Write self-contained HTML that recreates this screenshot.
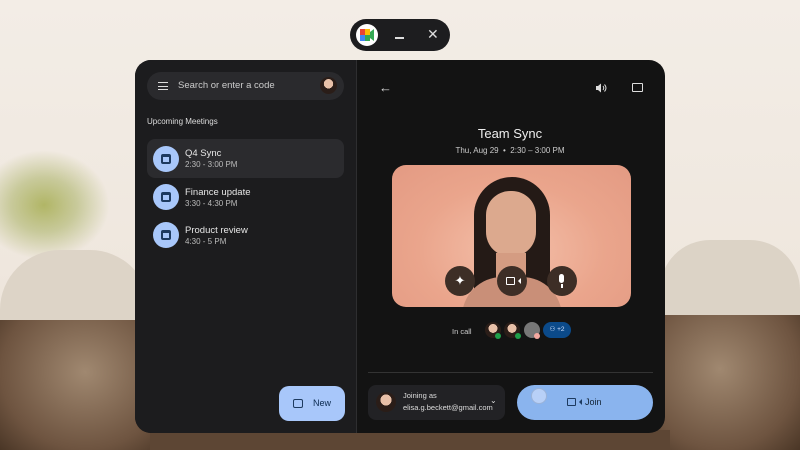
<!DOCTYPE html>
<html><head><style>
*{margin:0;padding:0;box-sizing:border-box}
body{width:800px;height:450px;overflow:hidden;position:relative;font-family:"Liberation Sans",sans-serif;
background:linear-gradient(180deg,#f3ede6 0%,#efe7de 60%,#e6dccf 100%);}
.abs{position:absolute}
.panel{left:135px;top:60px;width:530px;height:373px;border-radius:16px;overflow:hidden;background:#131313}
.left{left:0;top:0;width:222px;height:373px;background:#1c1c1e;border-right:1px solid #2e2e30}
.txt{color:#e6e6e6}
.cal{width:26px;height:26px;border-radius:50%;background:#a8c7fa;display:flex;align-items:center;justify-content:center}
.cal i{display:block;width:10px;height:10px;border:2px solid #1d3a5f;border-top-width:3px;border-radius:2px}
.av{border-radius:50%;background:radial-gradient(circle at 50% 40%,#e8c0a8 0 35%,#2a1d18 36%);}
</style></head><body>
<div class="abs" style="left:0;top:150px;width:110px;height:110px;background:radial-gradient(ellipse at 40% 50%,rgba(150,160,50,.7) 0,rgba(140,155,50,.4) 35%,rgba(0,0,0,0) 70%)"></div>
<div class="abs" style="left:0;top:250px;width:150px;height:100px;border-radius:60px 60px 10px 10px;background:#ddd4c7"></div>
<div class="abs" style="left:660px;top:240px;width:140px;height:90px;border-radius:50px 50px 10px 10px;background:#dcd3c6"></div>
<div class="abs" style="left:0;top:320px;width:170px;height:130px;background:radial-gradient(ellipse at 50% 40%,#a08870,#6e5440 70%,#4a3626)"></div>
<div class="abs" style="left:640px;top:315px;width:160px;height:135px;background:radial-gradient(ellipse at 50% 40%,#a08870,#6e5440 70%,#4a3626)"></div>
<div class="abs" style="left:150px;top:430px;width:520px;height:20px;background:#5d4634"></div>

<div class="abs" style="left:350px;top:19px;width:100px;height:32px;border-radius:16px;background:#1d1d1f"></div>
<div class="abs" style="left:356px;top:24px;width:22px;height:22px;border-radius:50%;background:#fff;display:flex;align-items:center;justify-content:center">
<svg width="14" height="12" viewBox="0 0 14 12"><rect x="0" y="0" width="5" height="6" fill="#ea4335"/><rect x="5" y="0" width="5" height="6" fill="#fbbc04"/><rect x="0" y="6" width="5" height="6" fill="#4285f4"/><rect x="5" y="6" width="5" height="6" fill="#34a853"/><path d="M10 3 14 0v12l-4-3z" fill="#34a853"/></svg></div>
<div class="abs" style="left:395px;top:37px;width:9px;height:1.5px;background:#ddd"></div>
<div class="abs txt" style="left:427px;top:26px;font-size:14px;color:#ddd">✕</div>

<div class="abs panel">
 <div class="abs left">
  <div class="abs" style="left:12px;top:12px;width:197px;height:28px;border-radius:14px;background:#2a2a2d"></div>
  <div class="abs" style="left:23px;top:22px;width:10px;height:8px;border-top:1.5px solid #ddd;border-bottom:1.5px solid #ddd"></div>
  <div class="abs" style="left:23px;top:25.5px;width:10px;height:1.5px;background:#ddd"></div>
  <div class="abs txt" style="left:43px;top:20px;font-size:9.5px;color:#ccc">Search or enter a code</div>
  <div class="abs av" style="left:185px;top:17px;width:17px;height:17px"></div>
  <div class="abs txt" style="left:12px;top:57px;font-size:8px;color:#ddd">Upcoming Meetings</div>
  <div class="abs" style="left:12px;top:79px;width:197px;height:39px;border-radius:8px;background:#2b2b2e"></div>
  <div class="abs cal" style="left:18px;top:86px"><i></i></div>
  <div class="abs txt" style="left:50px;top:88px;font-size:9.5px">Q4 Sync</div>
  <div class="abs txt" style="left:50px;top:100px;font-size:8px;color:#bbb">2:30 - 3:00 PM</div>
  <div class="abs cal" style="left:18px;top:124px"><i></i></div>
  <div class="abs txt" style="left:50px;top:127px;font-size:9.5px">Finance update</div>
  <div class="abs txt" style="left:50px;top:139px;font-size:8px;color:#bbb">3:30 - 4:30 PM</div>
  <div class="abs cal" style="left:18px;top:162px"><i></i></div>
  <div class="abs txt" style="left:50px;top:165px;font-size:9.5px">Product review</div>
  <div class="abs txt" style="left:50px;top:177px;font-size:8px;color:#bbb">4:30 - 5 PM</div>
  <div class="abs" style="left:144px;top:326px;width:66px;height:35px;border-radius:10px;background:#a8c7fa"></div>
  <div class="abs" style="left:158px;top:339px;width:10px;height:9px;border:1.5px solid #1d3a5f;border-radius:2px"></div>
  <div class="abs" style="left:178px;top:338px;font-size:9px;color:#0b2a4f">New</div>
 </div>
 <div class="abs txt" style="left:244px;top:20px;font-size:13px;color:#ddd">←</div>
 <svg class="abs" style="left:460px;top:23px" width="12" height="10" viewBox="0 0 12 10"><path d="M1 3h2l3-2.5v9L3 7H1z" fill="#ddd"/><path d="M8 3q1.5 2 0 4M9.5 1.5q3 3.5 0 7" stroke="#ddd" fill="none" stroke-width="1"/></svg>
 <div class="abs" style="left:497px;top:23px;width:11px;height:9px;border:1.5px solid #ddd;border-radius:1px"></div>
 <div class="abs txt" style="left:290px;top:66px;width:170px;text-align:center;font-size:13px;color:#eee">Team Sync</div>
 <div class="abs txt" style="left:290px;top:86px;width:170px;text-align:center;font-size:8px;color:#ccc">Thu, Aug 29 &nbsp;•&nbsp; 2:30 – 3:00 PM</div>
 <div class="abs" style="left:257px;top:105px;width:239px;height:142px;border-radius:14px;overflow:hidden;background:radial-gradient(ellipse at 50% 60%,#f4c0aa 0,#eaa58c 55%,#e39a83 100%)">
  <div class="abs" style="left:82px;top:12px;width:76px;height:140px;border-radius:38px 38px 10px 10px;background:#241a16"></div>
  <div class="abs" style="left:94px;top:26px;width:50px;height:66px;border-radius:25px 25px 26px 26px;background:#dca98e"></div>
  <div class="abs" style="left:104px;top:88px;width:30px;height:30px;background:#d49c82"></div>
  <div class="abs" style="left:70px;top:112px;width:100px;height:40px;border-radius:40px 40px 0 0;background:#c98f78"></div>
  <div class="abs" style="left:53px;top:101px;width:30px;height:30px;border-radius:50%;background:#3d2e26;color:#fff;font-size:13px;text-align:center;line-height:30px">✦</div>
  <div class="abs" style="left:105px;top:101px;width:30px;height:30px;border-radius:50%;background:#3d2e26"><div class="abs" style="left:9px;top:11px;width:9px;height:8px;border:1.5px solid #fff;border-radius:1px"></div><div class="abs" style="left:18px;top:12px;width:0;height:0;border:3px solid transparent;border-right-color:#fff"></div></div>
  <div class="abs" style="left:155px;top:101px;width:30px;height:30px;border-radius:50%;background:#3d2e26"><div class="abs" style="left:12px;top:8px;width:5px;height:9px;border-radius:3px;background:#fff"></div><div class="abs" style="left:14px;top:18px;width:1.5px;height:4px;background:#fff"></div></div>
 </div>
 <div class="abs txt" style="left:317px;top:267px;font-size:7.5px;color:#ccc">In call</div>
 <div class="abs av" style="left:350px;top:262px;width:16px;height:16px"></div>
 <div class="abs" style="left:360px;top:273px;width:6px;height:6px;border-radius:50%;background:#1e9e4a"></div>
 <div class="abs av" style="left:369px;top:262px;width:16px;height:16px"></div>
 <div class="abs" style="left:380px;top:273px;width:6px;height:6px;border-radius:50%;background:#1e9e4a"></div>
 <div class="abs" style="left:389px;top:262px;width:16px;height:16px;border-radius:50%;background:#777"></div>
 <div class="abs" style="left:399px;top:273px;width:6px;height:6px;border-radius:50%;background:#f4a8a0"></div>
 <div class="abs" style="left:408px;top:262px;width:28px;height:16px;border-radius:8px;background:#0b4a8a;color:#cfe0ff;font-size:6.5px;text-align:center;line-height:16px">⚇ +2</div>
 <div class="abs" style="left:233px;top:312px;width:285px;height:1px;background:#333"></div>
 <div class="abs" style="left:233px;top:325px;width:137px;height:35px;border-radius:8px;background:#222225"></div>
 <div class="abs av" style="left:241px;top:332px;width:20px;height:20px"></div>
 <div class="abs txt" style="left:268px;top:331px;font-size:7.5px;color:#ddd">Joining as</div>
 <div class="abs txt" style="left:268px;top:343px;font-size:7.5px;color:#ddd;width:94px;overflow:hidden;white-space:nowrap">elisa.g.beckett@gmail.com</div>
 <div class="abs txt" style="left:355px;top:336px;font-size:8px;color:#ddd">⌄</div>
 <div class="abs" style="left:382px;top:325px;width:136px;height:35px;border-radius:18px;background:#8ab4ee"></div>
 <div class="abs" style="left:396px;top:328px;width:16px;height:16px;border-radius:50%;background:#b8d0f7;border:1.5px solid #9bb3d8"></div>
 <div class="abs" style="left:432px;top:338px;width:9px;height:8px;border:1.5px solid #1d3a5f;border-radius:1px"></div>
 <div class="abs" style="left:441px;top:339px;width:0;height:0;border:3px solid transparent;border-right-color:#1d3a5f"></div>
 <div class="abs" style="left:450px;top:337px;font-size:9px;color:#123">Join</div>
</div>
</body></html>
